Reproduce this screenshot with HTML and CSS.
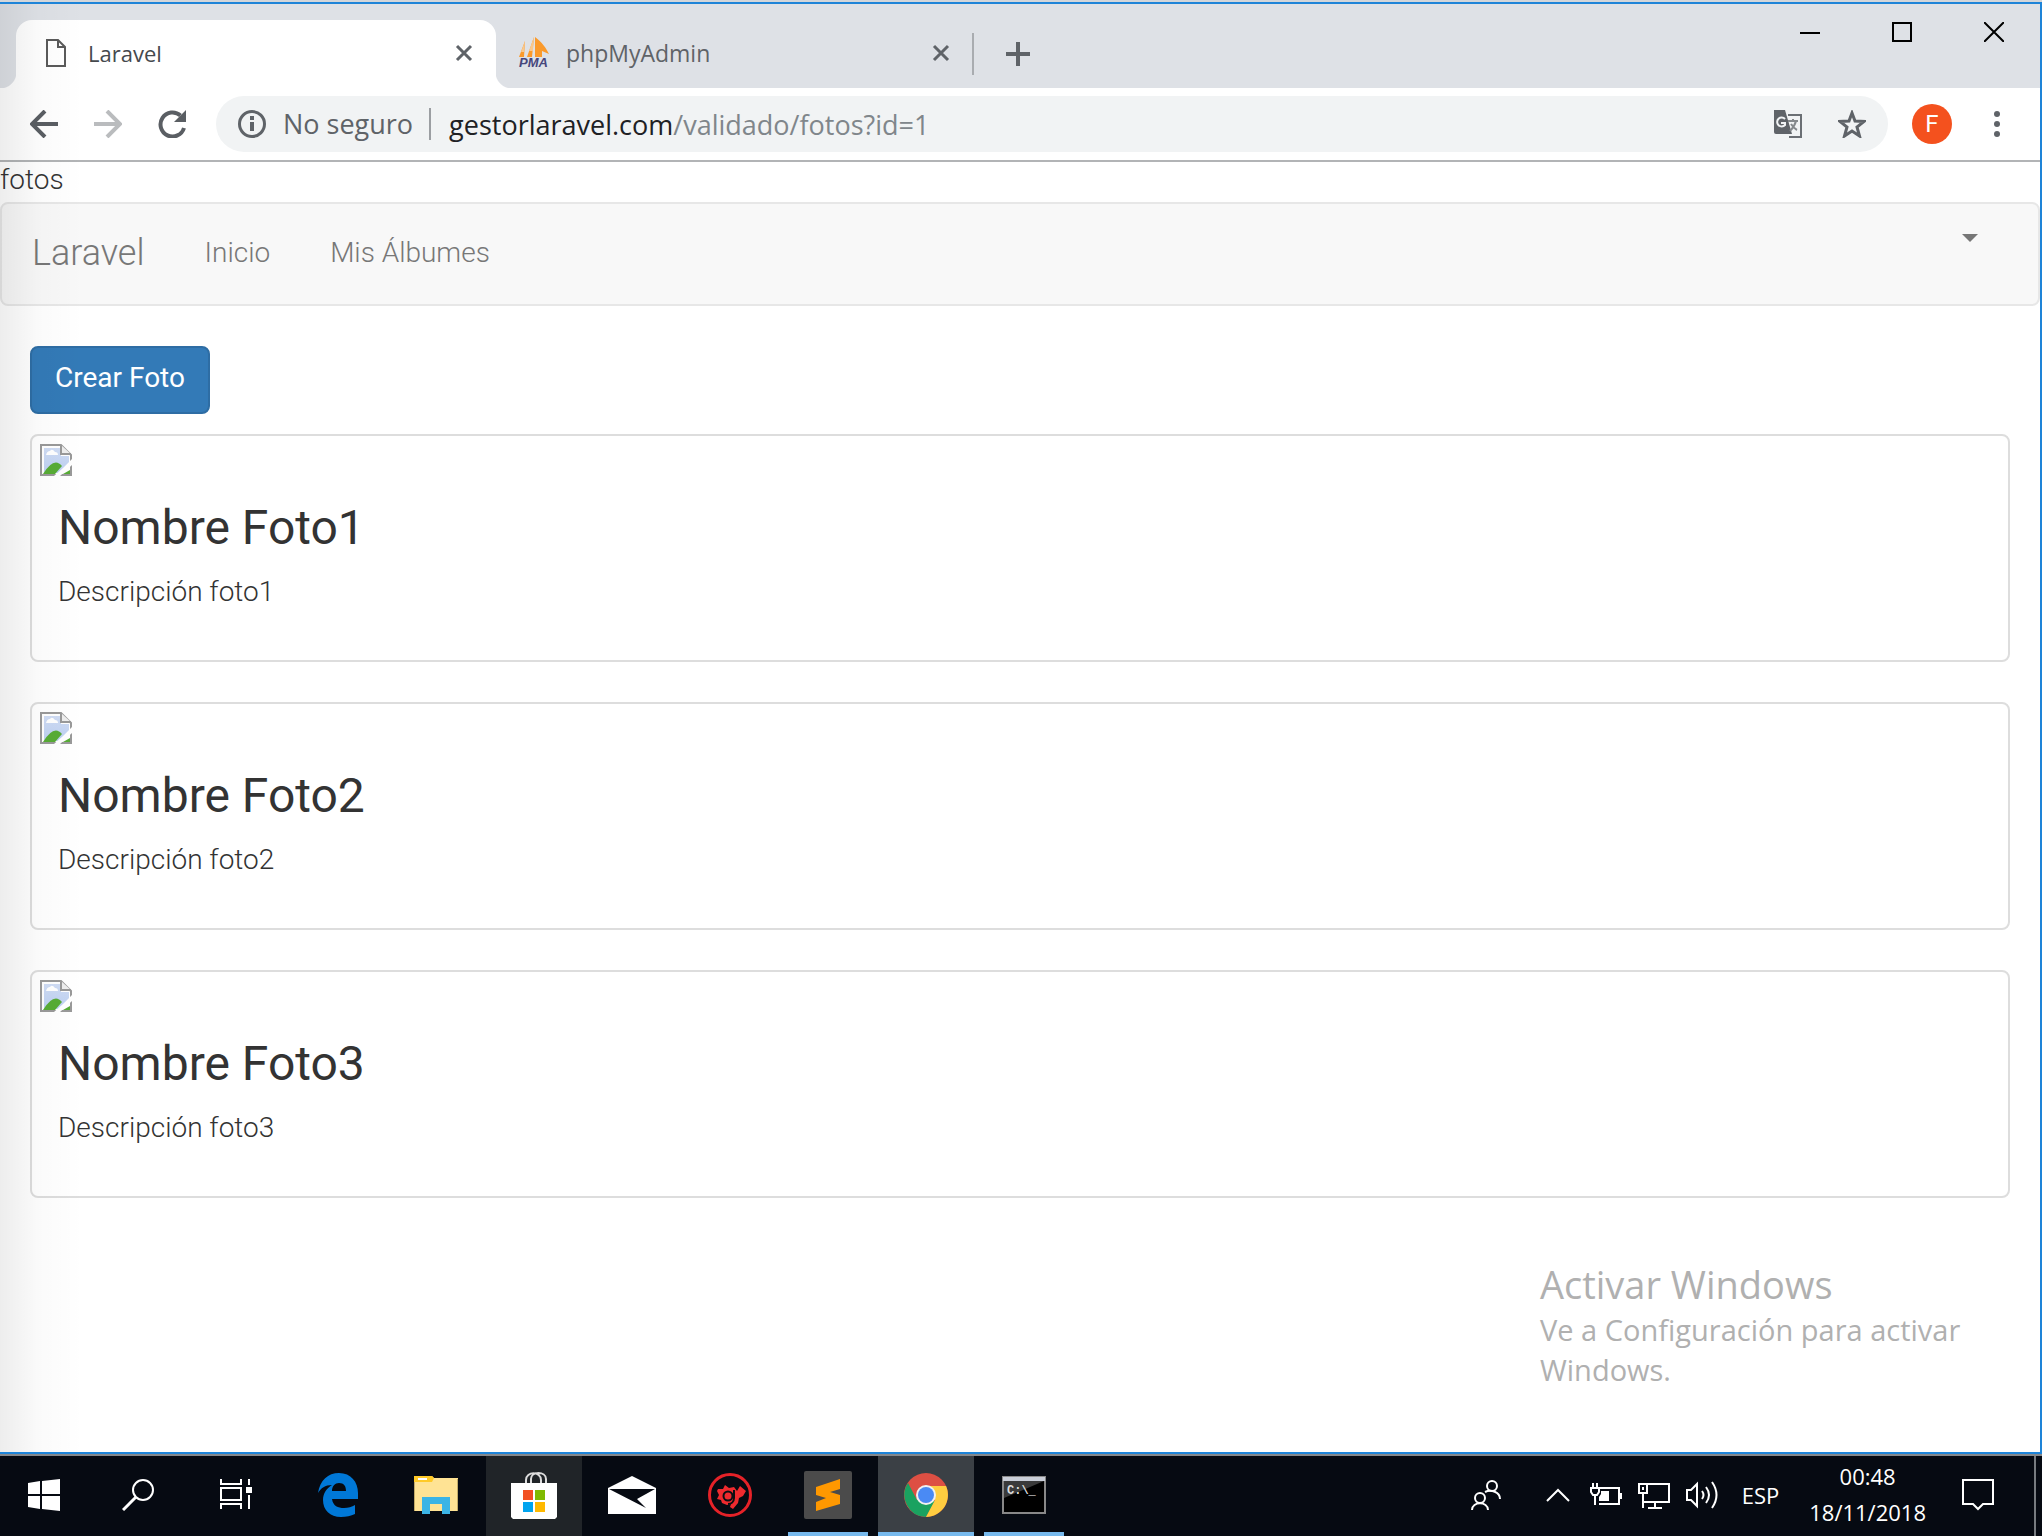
FILE: index.html
```html
<!DOCTYPE html>
<html lang="es">
<head>
<meta charset="utf-8">
<title>Laravel</title>
<link rel="stylesheet" href="styles.css">
</head>
<body>
<div class="screen">
  <div class="window">
    <header class="tabstrip">
      <div class="tab tab-active">
        <svg class="page-icon" viewBox="0 0 20 28" width="20" height="28"><path d="M1 1h11l7 7v19H1zM12 1v7h7" fill="none" stroke="#5a5a5a" stroke-width="2"/></svg>
        <span class="tab-title">Laravel</span>
        <button class="icon-btn" aria-label="Cerrar pestaña"><svg viewBox="0 0 18 18" width="18" height="18"><path d="M2 2l14 14M16 2L2 16" stroke="#5f6368" stroke-width="3"/></svg></button>
      </div>
      <div class="tab tab-idle">
        <svg class="pma-icon" viewBox="0 0 32 32" width="32" height="32"><path d="M7 4L1 20h5zM16 0L9 20h5zM17 0v20h7v-6l7 3C28 11 24 5 17 0z" fill="#fa9a2c"/><path d="M16 0l-5 14h4z" fill="#f9c88d"/><path d="M7 4L3 15h3z" fill="#f9c88d"/><text x="1" y="30" class="pma-text">PMA</text></svg>
        <span class="tab-title">phpMyAdmin</span>
        <button class="icon-btn" aria-label="Cerrar pestaña"><svg viewBox="0 0 18 18" width="18" height="18"><path d="M2 2l14 14M16 2L2 16" stroke="#5f6368" stroke-width="3"/></svg></button>
      </div>
      <button class="icon-btn new-tab" aria-label="Nueva pestaña"><svg viewBox="0 0 24 24" width="24" height="24"><path d="M12 0v24M0 12h24" stroke="#5f6368" stroke-width="4"/></svg></button>
      <div class="window-controls">
        <button class="icon-btn" aria-label="Minimizar"><svg viewBox="0 0 20 20" width="20" height="20"><path d="M0 11h20" stroke="#000" stroke-width="2"/></svg></button>
        <button class="icon-btn" aria-label="Maximizar"><svg viewBox="0 0 20 20" width="20" height="20"><path d="M1 1h18v18H1z" fill="none" stroke="#000" stroke-width="2"/></svg></button>
        <button class="icon-btn" aria-label="Cerrar"><svg viewBox="0 0 20 20" width="20" height="20"><path d="M0 0l20 20M20 0L0 20" stroke="#000" stroke-width="2"/></svg></button>
      </div>
    </header>
    <div class="toolbar">
      <div class="nav-buttons">
        <button class="icon-btn" aria-label="Atrás"><svg viewBox="0 0 28 28" width="28" height="28"><path d="M28 14H3M15 1L2 14l13 13" fill="none" stroke="#5a5e63" stroke-width="4"/></svg></button>
        <button class="icon-btn" aria-label="Adelante"><svg viewBox="0 0 28 28" width="28" height="28"><path d="M0 14h25M13 1l13 13-13 13" fill="none" stroke="#babcbe" stroke-width="4"/></svg></button>
        <button class="icon-btn" aria-label="Recargar"><svg viewBox="0 0 28 28" width="28" height="28"><path d="M26 18A12 12 0 1 1 22.500 5.500" fill="none" stroke="#5a5e63" stroke-width="4"/><path d="M28 0v12H16z" fill="#5a5e63"/></svg></button>
      </div>
      <div class="omnibox">
        <svg viewBox="0 0 28 28" width="28" height="28"><circle cx="14" cy="14" r="12.500" fill="none" stroke="#5f6368" stroke-width="3"/><path d="M14 12v9M14 6v4" stroke="#5f6368" stroke-width="4"/></svg>
        <span class="security">No seguro</span>
        <span class="url"><b>gestorlaravel.com</b>/validado/fotos?id=1</span>
        <button class="icon-btn" aria-label="Traducir"><svg viewBox="0 0 28 28" width="28" height="28"><path d="M14 5h13v22H15" fill="#f1f3f4" stroke="#6b6f74" stroke-width="2"/><path d="M0 0h11l7 24H2a2 2 0 0 1-2-2z" fill="#5f6368"/><path d="M11 9a4.500 4.500 0 1 0 0 6v-2H7" fill="none" stroke="#f1f3f4" stroke-width="2"/><path d="M14 11h10M19 9v2M22 11c-1 4-3 7-6 10M17 14c2 3 4 5 6 6" fill="none" stroke="#85898c" stroke-width="2"/></svg></button>
        <button class="icon-btn star" aria-label="Añadir a marcadores"><svg viewBox="0 0 28 28" width="28" height="28"><path d="M14 3l3 8 9 .5-7 5.500 2.500 9L14 21l-7.500 5L9 17l-7-5.500 9-.5z" fill="none" stroke="#5f6368" stroke-width="3"/></svg></button>
      </div>
      <button class="avatar">F</button>
      <button class="icon-btn" aria-label="Menú"><svg viewBox="0 0 6 26" width="6" height="26"><g fill="#5f6368"><circle cx="3" cy="3" r="3"/><circle cx="3" cy="13" r="3"/><circle cx="3" cy="23" r="3"/></g></svg></button>
    </div>
    <main class="page">
      <div class="stray">fotos</div>
      <nav class="navbar">
        <a class="brand" href="#">Laravel</a>
        <a class="nav-link" href="#">Inicio</a>
        <a class="nav-link" href="#">Mis Álbumes</a>
        <button class="icon-btn user-menu" aria-label="Menú de usuario"><span class="caret"></span></button>
      </nav>
      <div class="content">
        <button class="btn-primary">Crear Foto</button>
        <article class="thumbnail">
          <svg class="broken" viewBox="0 0 32 32" width="32" height="32"><use href="#broken-image"/></svg>
          <h3>Nombre Foto1</h3>
          <p>Descripción foto1</p>
        </article>
        <article class="thumbnail">
          <svg class="broken" viewBox="0 0 32 32" width="32" height="32"><use href="#broken-image"/></svg>
          <h3>Nombre Foto2</h3>
          <p>Descripción foto2</p>
        </article>
        <article class="thumbnail">
          <svg class="broken" viewBox="0 0 32 32" width="32" height="32"><use href="#broken-image"/></svg>
          <h3>Nombre Foto3</h3>
          <p>Descripción foto3</p>
        </article>
      </div>
      <aside class="watermark">
        <div class="watermark-title">Activar Windows</div>
        <div>Ve a Configuración para activar Windows.</div>
      </aside>
    </main>
    <div class="edge-shade"></div>
  </div>
  <footer class="taskbar">
    <button class="task start" aria-label="Inicio"><svg viewBox="0 0 32 32" width="32" height="32"><path d="M0 4l12-2v13H0zM14 2l18-2v15H14zM0 17h12v13L0 28zM14 17h18v15l-18-2z" fill="#fff"/></svg></button>
    <button class="task" aria-label="Buscar"><svg viewBox="0 0 32 32" width="32" height="32"><circle cx="21" cy="11" r="10" fill="none" stroke="#fff" stroke-width="2"/><path d="M14 18L1 31" stroke="#fff" stroke-width="3"/></svg></button>
    <button class="task view" aria-label="Vista de tareas"><svg viewBox="0 0 32 32" width="32" height="32"><path d="M1 0v5h20V0M1 9h20v12H1zM1 30v-5h20v5M29 0v6M29 16v14" fill="none" stroke="#fff" stroke-width="2"/><path d="M26 8h6v6h-6z" fill="#fff"/></svg></button>
    <button class="task" aria-label="Edge"><svg viewBox="0 0 40 44" width="40" height="44"><path d="M0 20C2 7 10 0 21 0c12 0 19 9 19 20v6H14c1 7 6 9 12 9 4 0 8-1 11-3v9c-4 2-9 3-14 3C12 44 5 37 5 27c0-7 4-12 9-15C7 12 3 15 0 20zM14 18h14c0-5-2-8-7-8-4 0-7 3-7 8z" fill="#0078d7"/></svg></button>
    <button class="task" aria-label="Explorador"><svg viewBox="0 0 44 38" width="44" height="38"><path d="M0 0h18l2 2h24v33H0z" fill="#ffe394"/><path d="M0 0h18l2 2-2 4H0z" fill="#ffca28"/><path d="M4 2h9v2H4z" fill="#fff"/><path d="M0 6h1v29H0zM43 3h1v32h-1z" fill="#c2ab68"/><path d="M8 38V21h28v17h-8V28H16v10z" fill="#3bb4e5"/></svg></button>
    <button class="task hover" aria-label="Tienda"><svg viewBox="0 0 46 48" width="46" height="48"><path d="M15 14V9c0-9 15-9 15 0v5M20 14V8c0-8 15-8 15 0v6" fill="none" stroke="#ddd" stroke-width="2"/><path d="M0 12h46v34l-2 2H2l-2-2z" fill="#fff"/><path d="M12 19h10v10H12z" fill="#f25022"/><path d="M24 19h10v10H24z" fill="#7fba00"/><path d="M12 31h10v10H12z" fill="#00a4ef"/><path d="M24 31h10v10H24z" fill="#ffb900"/></svg></button>
    <button class="task" aria-label="Correo"><svg viewBox="0 0 48 38" width="48" height="38"><path d="M0 12L24 0l24 12v26H0z" fill="#fff"/><path d="M1 13h46L29 23l9 9z" fill="#060a12"/></svg></button>
    <button class="task" aria-label="Configurador"><svg viewBox="0 0 44 46" width="44" height="46"><circle cx="22" cy="23" r="20.500" fill="none" stroke="#e52228" stroke-width="3"/><path d="M10 17l5 0 2-4 4 3 5-1 3 4 3-5 6 5-3 5-4 2-1 5-5 6-3-2 1-3-4 1-5-2-1-3-4-1 2-4-2-4z" fill="#ef2a2e"/><circle cx="20" cy="24" r="4.500" fill="none" stroke="#0b0f12" stroke-width="2"/><path d="M26 18v8c0 4-3 6-6 6" fill="none" stroke="#0b0f12" stroke-width="2"/></svg></button>
    <button class="task open" aria-label="Sublime Text"><svg viewBox="0 0 48 48" width="48" height="48"><rect width="48" height="48" rx="2" fill="#4b4b4b"/><path d="M12 16l24-8v10l-10 3 10 3v9l-24 7v-9l10-4-10-3z" fill="#ff9800"/></svg></button>
    <button class="task open current" aria-label="Chrome"><svg viewBox="0 0 44 44" width="44" height="44"><circle cx="22" cy="22" r="22" fill="#dd4f43"/><path d="M4 10A22 22 0 0 0 22 44l9-16-18-1z" fill="#1aa260"/><path d="M22 13h20a22 22 0 0 1-20 31l9-17z" fill="#ffcd40"/><circle cx="22" cy="22" r="10" fill="#f1f1f1"/><circle cx="22" cy="22" r="8" fill="#4a8af4"/></svg></button>
    <button class="task open" aria-label="Símbolo del sistema"><svg viewBox="0 0 44 38" width="44" height="38"><path d="M1 1h42v36H1z" fill="#000" stroke="#888" stroke-width="2"/><path d="M2 5h40L2 22z" fill="#3a3a3a"/><path d="M1 1h42v4H1z" fill="#c9ced8"/><text x="5" y="18" class="cmd-text">C:\_</text></svg></button>
    <div class="tray">
      <button class="icon-btn people" aria-label="Contactos"><svg viewBox="0 0 30 30" width="30" height="30"><g fill="none" stroke="#fff" stroke-width="2"><circle cx="21" cy="6" r="5"/><circle cx="9" cy="18" r="5"/><path d="M1 30c0-9 16-9 16 0M14 12c6-3 15 0 15 7"/></g></svg></button>
      <button class="icon-btn chevron" aria-label="Iconos ocultos"><svg viewBox="0 0 24 14" width="24" height="14"><path d="M1 13L12 2l11 11" fill="none" stroke="#fff" stroke-width="2"/></svg></button>
      <button class="icon-btn" aria-label="Batería"><svg viewBox="0 0 32 28" width="32" height="28"><path d="M10 7h19v16H9M31 12v6M3 2v4M7 2v4M5 14v10M1 7h8v4l-2 3H3l-2-3z" fill="none" stroke="#fff" stroke-width="2"/><path d="M11 10h8v10H9v-4l2-3z" fill="#fff"/></svg></button>
      <button class="icon-btn" aria-label="Red"><svg viewBox="0 0 32 28" width="32" height="28"><path d="M10 3h21v18H5M1 3h8v9H1zM5 12v15M17 21v6M10 27h14M5 6v3" fill="none" stroke="#fff" stroke-width="2"/></svg></button>
      <button class="icon-btn" aria-label="Volumen"><svg viewBox="0 0 32 28" width="32" height="28"><path d="M1 9h4l6-6v22l-6-6H1zM16 10q3 4 0 8M20 6q6 8 0 16M26 1q9 13 0 26" fill="none" stroke="#fff" stroke-width="2"/></svg></button>
      <button class="icon-btn lang">ESP</button>
      <button class="icon-btn clock"><span>00:48</span><span>18/11/2018</span></button>
      <button class="icon-btn notify" aria-label="Notificaciones"><svg viewBox="0 0 32 32" width="32" height="32"><path d="M1 1h30v24H21l-5 5-5-5H1z" fill="none" stroke="#fff" stroke-width="2"/></svg></button>
    </div>
  </footer>
</div>
<svg class="defs" width="0" height="0">
  <linearGradient id="sky" x1="0" y1="0" x2="0" y2="1"><stop offset="0" stop-color="#cfdcf4"/><stop offset="1" stop-color="#bdd0f2"/></linearGradient>
  <symbol id="broken-image" viewBox="0 0 32 32"><path d="M1 1h20l10 10v20H1z" fill="#fff" stroke="#999" stroke-width="2"/><path d="M4 4h17v8h8v8L20 29H4z" fill="url(#sky)"/><path d="M6 11q1-4 4-4 2-3 5 1 3 0 3 3z" fill="#fff"/><path d="M3 30Q14 12 22 22l-7 8z" fill="#57ac35"/><path d="M21 1v9h10" fill="#eee" stroke="#999" stroke-width="2"/><path d="M14 32l9-8 9-9v6L20 32z" fill="#fff"/><path d="M23 30l7-4v4z" fill="#57ac35"/></symbol>
</svg>
</body>
</html>
```
FILE: styles.css
```css
* { box-sizing: border-box; }
body { margin: 0; font-family: "Open Sans", "Noto Sans", sans-serif; }
button { font: inherit; color: inherit; cursor: pointer; }
svg { display: block; flex: none; }
.defs { position: absolute; }
.icon-btn { padding: 0; border: 0; background: none; display: flex; align-items: center; justify-content: center; }

.screen { min-height: 100vh; display: flex; flex-direction: column; border-top: 2px solid #d3d6da; }
.window { position: relative; flex: 1; display: flex; flex-direction: column; border: 2px solid #1e84d8; border-left: 0; background: #fff; }
.edge-shade { position: absolute; inset: 0 auto 0 0; width: 84px; background: linear-gradient(to right, rgba(0,0,0,.07), rgba(0,0,0,.02) 45%, transparent); pointer-events: none; }

.tabstrip { height: 84px; padding: 16px 0 0 16px; display: flex; align-items: flex-start; background: #dee1e6; }
.tab { height: 68px; display: flex; align-items: center; color: #5f6368; }
.tab-title { flex: 1; }
.tab-active { position: relative; width: 480px; padding: 0 23px 2px 30px; gap: 22px; background: #fff; color: #45494d; border-radius: 16px 16px 0 0; font-size: 22px; }
.tab-active::before, .tab-active::after { content: ""; position: absolute; bottom: 0; width: 16px; height: 16px; }
.tab-active::before { right: 100%; background: radial-gradient(circle at 0 0, transparent 16px, #fff 17px); }
.tab-active::after { left: 100%; background: radial-gradient(circle at 100% 0, transparent 16px, #fff 17px); }
.tab-idle { width: 476px; padding: 0 22px 2px; gap: 16px; font-size: 23px; }
.new-tab { height: 42px; margin-top: 13px; padding-left: 32px; border-left: 2px solid #a9acb0; }
.pma-icon { overflow: visible; }
.pma-text { font: italic bold 13px "Liberation Sans", sans-serif; fill: #46467c; }
.window-controls { margin-left: auto; padding-right: 36px; display: flex; gap: 72px; margin-top: 2px; }

.toolbar { height: 74px; padding: 8px 40px 8px 30px; display: flex; align-items: center; border-bottom: 2px solid #b2b4b6; }
.nav-buttons { display: flex; gap: 36px; padding-right: 30px; }
.omnibox { flex: 1; height: 56px; padding: 0 22px; display: flex; align-items: center; border-radius: 28px; background: #f1f3f4; font-size: 27px; color: #5f6368; }
.security { margin-left: 17px; padding-right: 16px; line-height: 32px; border-right: 2px solid #9b9ea2; }
.url { flex: 1; margin-left: 18px; color: #80868b; }
.url b { font-weight: 400; color: #202124; }
.star { margin-left: 36px; }
.avatar { width: 40px; height: 40px; margin: 0 42px 0 24px; padding: 0; border: 0; border-radius: 50%; background: #f4511e; color: #fff; font: 24px Roboto, sans-serif; }

.page { flex: 1; font: 300 28px/40px Roboto, sans-serif; color: #333; position: relative; }
.stray { line-height: 36px; padding-bottom: 4px; }
.navbar { height: 104px; padding: 0 60px 2px 30px; display: flex; align-items: center; border: 2px solid #e7e7e7; border-radius: 8px; background: #f8f8f8; color: #777; }
.navbar a { color: inherit; text-decoration: none; }
.brand { padding-right: 60px; font-size: 36px; }
.nav-link { padding-right: 60px; }
.user-menu { margin-left: auto; height: 28px; align-self: flex-start; margin-top: 20px; }
.caret { border: 8px solid transparent; border-top-color: #777; border-bottom: 0; }
.content { padding: 40px 30px 0; }
.btn-primary { display: block; height: 68px; padding: 0 23px 4px; border: 2px solid #2e6da4; border-radius: 8px; background: #337ab7; color: #fff; font-weight: 400; margin-bottom: 20px; }
.thumbnail { height: 228px; margin-bottom: 40px; padding: 8px; border: 2px solid #ddd; border-radius: 8px; }
.thumbnail h3 { margin: 26px 18px 18px; font-size: 48px; line-height: 52px; font-weight: 400; }
.thumbnail p { margin: 0 18px; }
.watermark { position: absolute; right: 60px; bottom: 62px; width: 440px; color: #b0b0b0; font: 29px/40px "Open Sans", sans-serif; }
.watermark-title { font-size: 38px; line-height: 52px; }

.taskbar { height: 82px; display: flex; align-items: stretch; gap: 2px; border-top: 2px solid #84888c; background: #060a12; color: #fff; font-size: 22px; }
.task { width: 96px; padding: 0 0 2px; border: 0; background: none; display: flex; align-items: center; justify-content: center; }
.start { width: 88px; }
.view { margin-right: 4px; }
.hover { background: #202428; }
.open { background: linear-gradient(#76b9ed, #76b9ed) center bottom / 80px 4px no-repeat; }
.current { background: linear-gradient(#76b9ed, #76b9ed) center bottom / 100% 4px no-repeat #3b4045; }
.cmd-text { font: bold 12px "Liberation Mono", monospace; fill: #ddd; }
.tray { margin-left: auto; margin-right: 6px; padding: 0 40px 3px 0; display: flex; align-items: center; gap: 16px; border-right: 2px solid #777b80; }
.people { margin-right: 29px; }
.chevron { margin-right: 4px; }
.lang { margin-left: 8px; }
.clock { flex-direction: column; line-height: 36px; margin: 0 20px 2px 14px; }
```
